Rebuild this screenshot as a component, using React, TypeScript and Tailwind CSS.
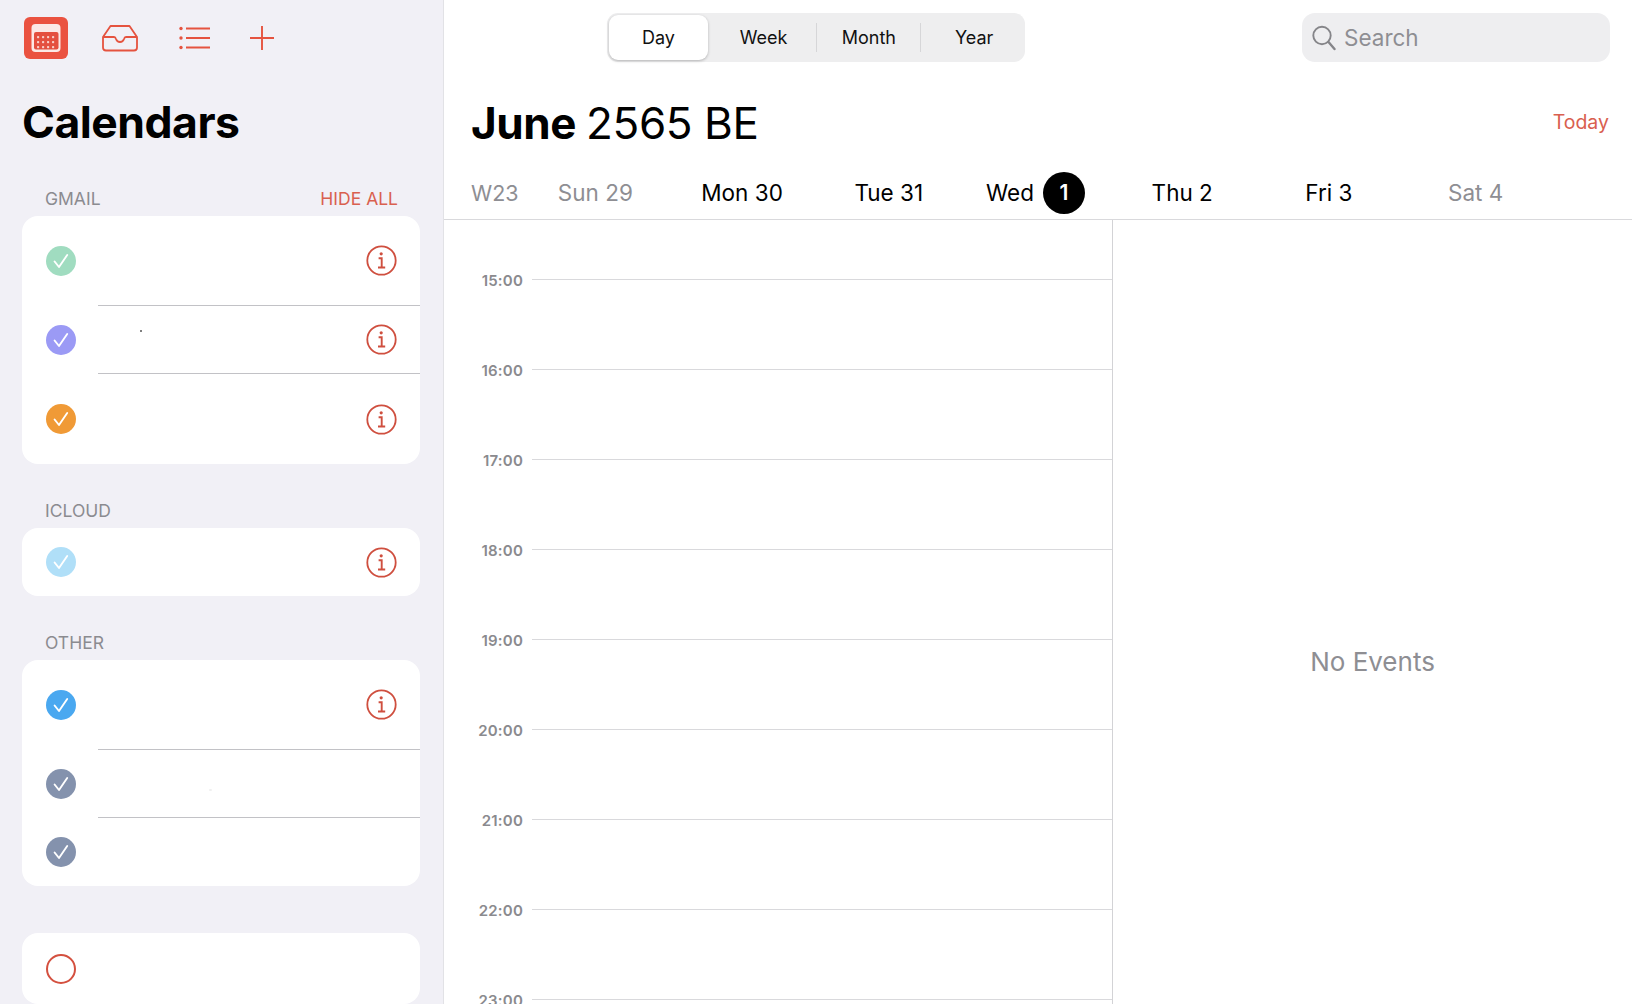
const RED = "#e5533f";

const CalendarTile = () => (
  <svg width="44" height="42" viewBox="0 0 44 42" aria-hidden="true">
    <rect width="44" height="42" rx="6" fill="#ea5240" />
    <rect x="7.5" y="7" width="29" height="28" rx="4" fill="#fbe9e6" />
    <rect x="10" y="15" width="24.5" height="17.5" rx="2" fill="#e4503f" />
    {[13, 18, 23, 28].map((x) => [19, 24, 29].map((y) => (
      <rect key={`${x}-${y}`} x={x} y={y} width="2.2" height="2.2" rx="0.8" fill="#f8cfc9" />
    )))}
  </svg>
);

const InboxIcon = () => (
  <svg width="38" height="28" viewBox="0 0 38 28" fill="none" stroke={RED} strokeWidth="1.8" strokeLinejoin="round" aria-hidden="true">
    <path d="M2 13 L9.5 2 H28.5 L36 13 V23.5 Q36 26.5 33 26.5 H5 Q2 26.5 2 23.5 Z" />
    <path d="M2 13 H13 Q14.5 13 15 15 Q16 18 19 18 Q22 18 23 15 Q23.5 13 25 13 H36" />
  </svg>
);

const ListIcon = () => (
  <svg width="32" height="26" viewBox="0 0 32 26" fill="none" stroke={RED} strokeWidth="1.8" aria-hidden="true">
    <path d="M7 3.5 H31 M7 13 H31 M7 22.5 H31" />
    <circle cx="2" cy="3.5" r="1.7" fill={RED} stroke="none" />
    <circle cx="2" cy="13" r="1.7" fill={RED} stroke="none" />
    <circle cx="2" cy="22.5" r="1.7" fill={RED} stroke="none" />
  </svg>
);

const PlusIcon = () => (
  <svg width="26" height="26" viewBox="0 0 26 26" fill="none" stroke={RED} strokeWidth="1.9" aria-hidden="true">
    <path d="M13 1 V25 M1 13 H25" />
  </svg>
);

const InfoIcon = () => (
  <svg width="31" height="31" viewBox="0 0 31 31" fill="none" stroke="#cf4f3f" strokeWidth="1.8" aria-hidden="true">
    <circle cx="15.5" cy="15.5" r="14.2" />
    <circle cx="15.2" cy="8.8" r="1.6" fill="#cf4f3f" stroke="none" />
    <path d="M12.6 13.2 H15.7 V22.3 M12 22.5 H19.2" strokeWidth="1.9" />
  </svg>
);

const CheckCircle = ({ color }: { color: string }) => (
  <svg width="30" height="30" viewBox="0 0 30 30" fill="none" aria-hidden="true">
    <circle cx="15" cy="15" r="15" fill={color} />
    <path d="M8.6 15.5 L13 21 L21.2 9" stroke="#fff" strokeWidth="1.9" strokeLinecap="round" strokeLinejoin="round" />
  </svg>
);

const Divider = () => <div className="ml-[76px] h-px bg-[#c2c2c6]" />;

const CalendarRow = ({ height, color, info = true, speck }: { height: string; color: string; info?: boolean; speck?: string }) => (
  <div className={`relative flex items-center justify-between pl-[24px] pr-[23px] ${height}`}>
    <CheckCircle color={color} />
    {info && <InfoIcon />}
    {speck && <span className={speck} />}
  </div>
);

const SectionLabel = ({ text, action, className }: { text: string; action?: string; className: string }) => (
  <div className={`flex items-center justify-between pl-[23px] pr-[22px] text-[17.5px] leading-[22px] text-[#8b8b90] ${className}`}>
    <span>{text}</span>
    {action && <span className="text-[#d9604f]">{action}</span>}
  </div>
);

const Sidebar = () => (
  <aside className="flex h-[1004px] w-[444px] shrink-0 flex-col overflow-hidden border-r border-[#e2e2e6] bg-[#f1f0f6] pl-[22px] pr-[23px]">
    <div className="mt-[17px] flex h-[42px] items-center pl-[2px]">
      <CalendarTile />
      <div className="ml-[33px]"><InboxIcon /></div>
      <div className="ml-[40px]"><ListIcon /></div>
      <div className="ml-[38px]"><PlusIcon /></div>
    </div>
    <h1 className="mt-[35px] text-[44.5px] font-bold leading-[56px] tracking-[-0.5px] text-black">Calendars</h1>
    <SectionLabel text="GMAIL" action="HIDE ALL" className="mt-[38px]" />
    <div className="mt-[6px] rounded-[16px] bg-white">
      <CalendarRow height="h-[89px]" color="#a0dcc0" />
      <Divider />
      <CalendarRow height="h-[67px]" color="#9b9af5" speck="absolute left-[118px] top-[24px] h-[2px] w-[2px] rounded-full bg-[#555]" />
      <Divider />
      <CalendarRow height="h-[90px]" color="#f09a36" />
    </div>
    <SectionLabel text="ICLOUD" className="mt-[36px]" />
    <div className="mt-[6px] rounded-[16px] bg-white">
      <CalendarRow height="h-[68px]" color="#b0dff8" />
    </div>
    <SectionLabel text="OTHER" className="mt-[36px]" />
    <div className="mt-[6px] rounded-[16px] bg-white">
      <CalendarRow height="h-[89px]" color="#4aa8f0" />
      <Divider />
      <CalendarRow height="h-[67px]" color="#8492ad" info={false} speck="absolute left-[187px] top-[39px] h-[2px] w-[3px] rounded-full bg-[#f0f0f0]" />
      <Divider />
      <CalendarRow height="h-[68px]" color="#8492ad" info={false} />
    </div>
    <div className="mt-[47px] flex h-[71px] shrink-0 items-center rounded-[16px] bg-white pl-[24px]">
      <span className="h-[30px] w-[30px] rounded-full border-2 border-[#d4503f]" />
    </div>
  </aside>
);

const SegmentedControl = () => (
  <div className="flex h-[49px] w-[418px] items-center rounded-[11px] bg-[#eeeeef] p-[2px] text-[18px] text-[#111]">
    <div className="flex h-[45px] w-[99px] items-center justify-center rounded-[9px] bg-white shadow-[0_1px_3px_rgba(0,0,0,0.25)]">Day</div>
    <div className="flex w-[108px] justify-center pl-[4px]">Week</div>
    <div className="h-[29px] w-px bg-[#d6d6d8]" />
    <div className="flex w-[104px] justify-center pl-[1px]">Month</div>
    <div className="h-[29px] w-px bg-[#d6d6d8]" />
    <div className="flex w-[102px] justify-center pl-[4px]">Year</div>
  </div>
);

const SearchBox = () => (
  <div className="flex h-[49px] w-[308px] items-center rounded-[13px] bg-[#eeeef0] pl-[10px] text-[22.5px] text-[#8e8e93]">
    <svg width="24" height="26" viewBox="0 0 24 26" fill="none" stroke="#858589" strokeWidth="1.9" strokeLinecap="round" aria-hidden="true">
      <circle cx="10" cy="10.5" r="8.7" />
      <path d="M16.5 17 L22.5 24" strokeWidth="2.4" />
    </svg>
    <span className="ml-[8px]">Search</span>
  </div>
);

const days = [
  { label: "Sun 29", muted: true },
  { label: "Mon 30" },
  { label: "Tue 31" },
  { label: "Wed", today: "1" },
  { label: "Thu 2" },
  { label: "Fri 3" },
  { label: "Sat 4", muted: true },
];

const WeekHeader = () => (
  <div className="mt-[14px] flex h-[55px] items-center border-b border-[#d9d9dc] pl-[27px] pt-[2px] text-[22.5px]">
    <span className="w-[51px] text-[21.5px] text-[#8e8e93]">W23</span>
    <div className="grid w-[1027px] grid-cols-7">
      {days.map((day) => (
        <div key={day.label} className={`flex items-center justify-center gap-[9px] ${day.muted ? "text-[#8e8e93]" : "text-black"}`}>
          <span>{day.label}</span>
          {day.today && (
            <span className="flex h-[42px] w-[42px] items-center justify-center rounded-full bg-black text-[21px] font-semibold text-white">{day.today}</span>
          )}
        </div>
      ))}
    </div>
  </div>
);

const hours = ["15:00", "16:00", "17:00", "18:00", "19:00", "20:00", "21:00", "22:00", "23:00"];

const DayGrid = () => (
  <div className="flex min-h-0 flex-1">
    <div className="w-[669px] shrink-0 overflow-hidden border-r border-[#d3d3d6] pt-[14px]">
      {hours.map((hour) => (
        <div key={hour} className="flex h-[90px] items-center">
          <span className="w-[79px] pt-[4px] text-right text-[15px] font-semibold tracking-[0.2px] text-[#8a8a8e]">{hour}</span>
          <div className="ml-[9px] h-px flex-1 bg-[#d9d9dc]" />
        </div>
      ))}
    </div>
    <div className="flex flex-1 items-center justify-center pt-[99px] text-[26px] text-[#8e8e93]">No Events</div>
  </div>
);

export default function App() {
  return (
    <div className="flex h-[1004px] w-[1632px] overflow-hidden bg-white font-['Inter','Noto_Sans',sans-serif]">
      <Sidebar />
      <main className="flex min-w-0 flex-1 flex-col">
        <div className="mt-[13px] flex h-[49px] items-center justify-between pl-[163px] pr-[22px]">
          <SegmentedControl />
          <SearchBox />
        </div>
        <div className="mt-[33px] flex h-[56px] items-center justify-between pl-[27px] pr-[23px]">
          <h2 className="text-[44px] leading-[56px] tracking-[-0.4px] text-black"><span className="mr-[-2px] font-bold">June</span> 2565 BE</h2>
          <span className="text-[19.5px] text-[#d9604f]">Today</span>
        </div>
        <WeekHeader />
        <DayGrid />
      </main>
    </div>
  );
}
